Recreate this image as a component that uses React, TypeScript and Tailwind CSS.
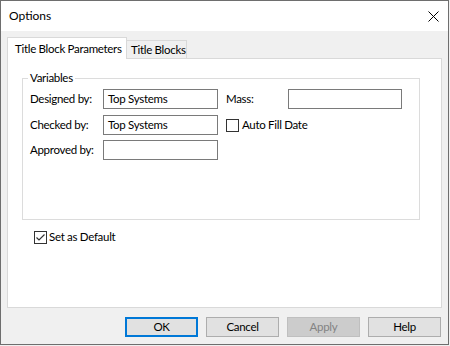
const font = { fontFamily: 'Lato, "Noto Sans", sans-serif', letterSpacing: '-0.3px' };

function Checkbox({ checked }: { checked?: boolean }) {
  return (
    <span className="w-[13px] h-[13px] border border-[#333333] bg-white flex items-center justify-center shrink-0">
      {checked && (
        <svg width="11" height="11" viewBox="0 0 11 11">
          <path d="M1.5 5.5 L4 8 L9.5 2.5" fill="none" stroke="#333333" strokeWidth="1.2" />
        </svg>
      )}
    </span>
  );
}

function TextBox({ value, width }: { value?: string; width: string }) {
  return (
    <div className={`${width} h-[20px] border border-[#7a7a7a] bg-white flex items-center pl-[4px] leading-none whitespace-nowrap`}>
      {value}
    </div>
  );
}

function Button({ label, primary, disabled }: { label: string; primary?: boolean; disabled?: boolean }) {
  let cls = 'bg-[#e1e1e1] border border-[#adadad] text-black';
  if (primary) cls = 'bg-[#e1e1e1] border-2 border-[#0078d7] text-black';
  if (disabled) cls = 'bg-[#cccccc] border border-[#bfbfbf] text-[#838383]';
  return (
    <div className={`w-[73px] h-[20px] flex items-center justify-center ${cls}`}>
      {label}
    </div>
  );
}

export default function App() {
  return (
    <div className="w-[450px] h-[346px] bg-[#f0f0f0]" style={font}>
      <div className="w-[449px] h-[345px] border border-[#6e6e6e] flex flex-col bg-[#f0f0f0] text-[11.5px] leading-[16px] text-black whitespace-nowrap">
        {/* title bar */}
        <div className="h-[30px] bg-white flex items-center justify-between pl-[8px] pr-[9px]">
          <span className="text-[12px] tracking-normal">Options</span>
          <svg width="11" height="11" viewBox="0 0 11 11">
            <path d="M0.5 0.5 L10.5 10.5 M10.5 0.5 L0.5 10.5" stroke="#000000" strokeWidth="1" />
          </svg>
        </div>

        <div className="flex-1 px-[6px] pt-[6px]">
          {/* tabs */}
          <div className="flex items-end h-[21px]">
            <div className="relative z-10 w-[120px] h-[22px] -mb-px bg-white border border-b-0 border-[#d9d9d9] pl-[7px] flex items-center">
              Title Block Parameters
            </div>
            <div className="w-[60px] h-[18px] bg-[#f0f0f0] border border-l-0 border-b-0 border-[#d9d9d9] pl-[4px] flex items-center">
              Title Blocks
            </div>
          </div>

          {/* tab page */}
          <div className="h-[250px] bg-white border border-[#d9d9d9]">
            <fieldset className="ml-[14px] mt-[11px] w-[398px] h-[150px] border border-[#dcdcdc]">
              <legend className="ml-[5px] px-[2px] leading-[16px]">Variables</legend>
              <div className="pt-[3px] pl-[7px] flex flex-col">
                <div className="flex items-center h-[20px]">
                  <span className="w-[73px]">Designed by:</span>
                  <TextBox value="Top Systems" width="w-[115px]" />
                  <span className="ml-[8px] w-[62px]">Mass:</span>
                  <TextBox width="w-[114px]" />
                </div>
                <div className="flex items-center h-[20px] mt-[6px]">
                  <span className="w-[73px]">Checked by:</span>
                  <TextBox value="Top Systems" width="w-[115px]" />
                  <span className="ml-[8px] flex items-center gap-[3px]">
                    <Checkbox />
                    <span>Auto Fill Date</span>
                  </span>
                </div>
                <div className="flex items-center h-[20px] mt-[5px]">
                  <span className="w-[73px]">Approved by:</span>
                  <TextBox width="w-[115px]" />
                </div>
              </div>
            </fieldset>

            <div className="ml-[26px] mt-[9px] h-[16px] flex items-center gap-[2px]">
              <Checkbox checked />
              <span>Set as Default</span>
            </div>
          </div>

          {/* buttons */}
          <div className="mt-[9px] flex justify-end gap-[8px] pr-px">
            <Button label="OK" primary />
            <Button label="Cancel" />
            <Button label="Apply" disabled />
            <Button label="Help" />
          </div>
        </div>
      </div>
    </div>
  );
}
